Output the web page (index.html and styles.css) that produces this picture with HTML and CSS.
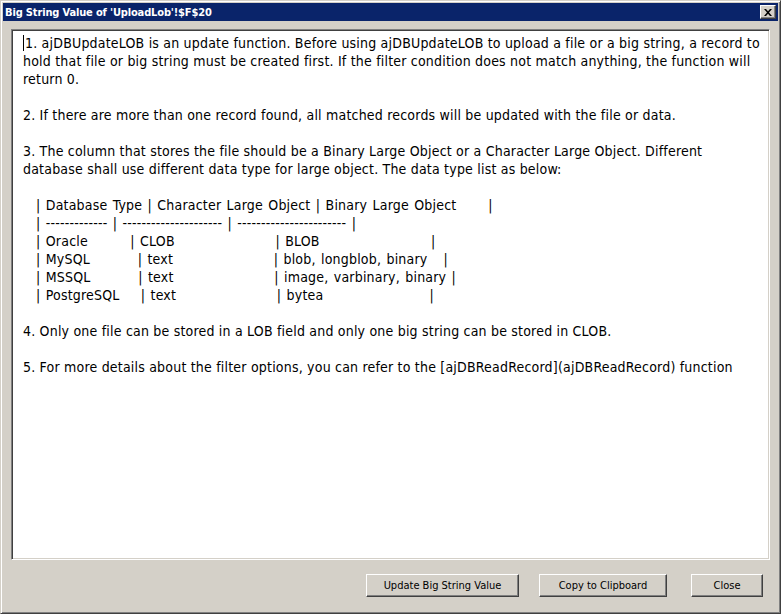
FILE: index.html
```html
<!DOCTYPE html>
<html>
<head>
<meta charset="utf-8">
<link rel="stylesheet" href="styles.css">
</head>
<body>
<div class="window">
  <div class="titlebar">
    <span class="title">Big String Value of 'UploadLob'!$F$20</span>
    <button class="tb-close" aria-label="Close">
      <svg width="8" height="7" viewBox="0 0 8 7"><path d="M0 0h2l2 2.2L6 0h2L5 3.5 8 7H6L4 4.8 2 7H0l3-3.5z" fill="#000"/></svg>
    </button>
  </div>
  <div class="body">
    <div class="textbox"><div class="content"><span class="caret"></span>1. ajDBUpdateLOB is an update function. Before using ajDBUpdateLOB to upload a file or a big string, a record to
hold that file or big string must be created first. If the filter condition does not match anything, the function will
return 0.

2. If there are more than one record found, all matched records will be updated with the file or data.

3. The column that stores the file should be a Binary Large Object or a Character Large Object. Different
database shall use different data type for large object. The data type list as below:

<div class="table">| Database Type | Character Large Object | Binary Large Object      |
| ------------- | --------------------- | ----------------------- |
| Oracle        | CLOB                   | BLOB                     |
| MySQL         | text                   | blob, longblob, binary   |
| MSSQL         | text                   | image, varbinary, binary |
| PostgreSQL    | text                   | bytea                    |</div>
4. Only one file can be stored in a LOB field and only one big string can be stored in CLOB.

5. For more details about the filter options, you can refer to the [ajDBReadRecord](ajDBReadRecord) function</div></div>
    <div class="buttons">
      <button class="btn btn-update">Update Big String Value</button>
      <button class="btn btn-copy">Copy to Clipboard</button>
      <button class="btn btn-close">Close</button>
    </div>
  </div>
</div>
</body>
</html>
```
FILE: styles.css
```css
html, body {
  margin: 0;
  padding: 0;
  background: #d4d0c8;
}
.window {
  width: 781px;
  height: 614px;
  box-sizing: border-box;
  background: #d4d0c8;
  border-style: solid;
  border-width: 1px;
  border-color: #d4d0c8 #404040 #404040 #d4d0c8;
  box-shadow: inset 1px 1px #ffffff, inset -1px -1px #808080;
  padding: 2px;
  display: flex;
  flex-direction: column;
}
.titlebar {
  height: 18px;
  background: #0a246a;
  display: flex;
  align-items: center;
  justify-content: space-between;
  padding: 0 2px 0 2px;
}
.title {
  color: #ffffff;
  font-family: "DejaVu Sans Condensed", "Liberation Sans", sans-serif;
  font-weight: bold;
  font-size: 11px;
  letter-spacing: -0.15px;
  white-space: nowrap;
}
.tb-close {
  width: 16px;
  height: 14px;
  padding: 0;
  margin: 0;
  background: #d4d0c8;
  border-style: solid;
  border-width: 1px;
  border-color: #ffffff #404040 #404040 #ffffff;
  box-shadow: inset -1px -1px #808080;
  display: flex;
  align-items: center;
  justify-content: center;
  box-sizing: border-box;
}
.body {
  flex: 1;
  padding: 8px 15px 0 8px;
  display: flex;
  flex-direction: column;
}
.textbox {
  height: 531px;
  box-sizing: border-box;
  background: #ffffff;
  border-style: solid;
  border-width: 1px;
  border-color: #808080 #ffffff #ffffff #808080;
  box-shadow: inset 1px 1px #404040, inset -1px -1px #d4d0c8;
  margin-right: -7px;
  padding: 4px 6px 0 11px;
  overflow: hidden;
}
.content {
  white-space: pre;
  font-family: "DejaVu Sans Condensed", "Liberation Sans", sans-serif;
  font-size: 14px;
  letter-spacing: 0.2px;
  line-height: 18px;
  color: #000000;
}
.table {
  padding-left: 13px;
  word-spacing: 1.1px;
}
.caret {
  display: inline-block;
  width: 0;
  height: 16px;
  border-left: 1px solid #000;
  vertical-align: -3px;
  margin-right: 1px;
}
.buttons {
  margin-top: 14px;
  display: flex;
  justify-content: flex-end;
}
.btn {
  height: 23px;
  box-sizing: border-box;
  background: #d4d0c8;
  border-style: solid;
  border-width: 1px;
  border-color: #ffffff #404040 #404040 #ffffff;
  box-shadow: inset -1px -1px #808080;
  font-family: "DejaVu Sans Condensed", "Liberation Sans", sans-serif;
  font-size: 11px;
  color: #000;
  padding: 0;
  margin: 0;
}
.btn-update { width: 153px; }
.btn-copy { width: 128px; margin-left: 20px; }
.btn-close { width: 72px; margin-left: 24px; }
```
